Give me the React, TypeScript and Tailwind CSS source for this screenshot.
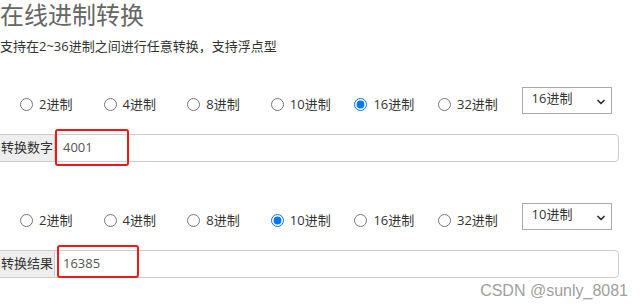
import { ChevronDown } from "lucide-react";

const bases = [2, 4, 8, 10, 16, 32];

const font = "font-['Open_Sans','Noto_Sans_CJK_SC',sans-serif]";

function RadioRow({ name, checked }: { name: string; checked: number }) {
  return (
    <div className="flex items-start h-[27px]">
      <div className="flex pl-[20px] pt-[11px]">
        {bases.map((b) => (
          <label key={b} className="flex items-center w-[83.6px] h-[13px] text-[13px] leading-[13px] text-[#333]">
            <input
              type="radio"
              name={name}
              readOnly
              checked={b === checked}
              className="m-0 size-[13px] shrink-0"
            />
            <span className="ml-[6px]">{b}进制</span>
          </label>
        ))}
      </div>
      <div className="relative w-[90px] h-[27px] border border-[#aaa] bg-white flex items-center pl-[9px] text-[13px] text-[#333]">
        <span className="-mt-[3px]">{checked}进制</span>
        <ChevronDown size={12} strokeWidth={3.5} className="absolute right-[4px] top-[8px] text-[#333]" />
      </div>
    </div>
  );
}

function InputGroup({
  label,
  value,
  mark,
}: {
  label: string;
  value: string;
  mark: { left: string; width: string; height: string };
}) {
  return (
    <div className="relative flex w-[619px] h-[28px]">
      <div className="w-[54px] shrink-0 border-y border-[#ccc] bg-[#eee] flex items-center pl-[1px] text-[13px] text-[#333]">
        {label}
      </div>
      <div className="flex-1 border border-[#ccc] rounded-r-[4px] flex items-center pl-[8px] text-[13px] text-[#555]">
        {value}
      </div>
      {/* highlight drawn over the screenshot */}
      <div
        className={`absolute -top-[5px] border-[2.5px] border-[#f01818] rounded-[3px] ${mark.left} ${mark.width} ${mark.height}`}
      />
    </div>
  );
}

export default function App() {
  return (
    <main className={`relative w-[643px] h-[306px] overflow-hidden bg-white ${font}`}>
      <h1 className="text-[24px] leading-[30px] text-[#666] font-normal">在线进制转换</h1>
      <p className="mt-[6px] text-[13px] leading-[20px] text-[#333]">
        支持在2~36进制之间进行任意转换，支持浮点型
      </p>

      <div className="mt-[31px]">
        <RadioRow name="from" checked={16} />
      </div>
      <div className="mt-[20px]">
        <InputGroup label="转换数字" value="4001" mark={{ left: "left-[55px]", width: "w-[74px]", height: "h-[37px]" }} />
      </div>

      <div className="mt-[41px]">
        <RadioRow name="to" checked={10} />
      </div>
      <div className="mt-[20px]">
        <InputGroup label="转换结果" value="16385" mark={{ left: "left-[57px]", width: "w-[82px]", height: "h-[33px]" }} />
      </div>

      <div className="absolute right-[15px] bottom-[5px] text-[16px] leading-[20px] text-[#a0a0a0] font-['Liberation_Sans',sans-serif]">
        CSDN @sunly_8081
      </div>
    </main>
  );
}
